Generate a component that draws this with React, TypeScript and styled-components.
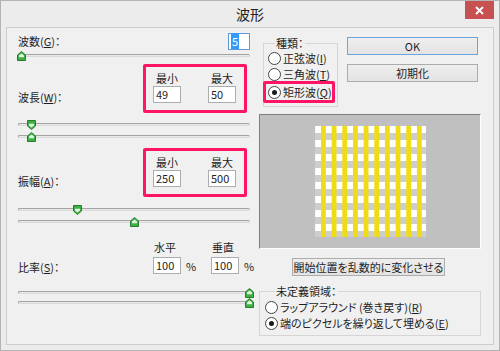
import React from "react";
import styled, { createGlobalStyle } from "styled-components";

const Global = createGlobalStyle`
  html, body { margin: 0; padding: 0; background: #ffffff; }
  body {
    font-family: "Noto Sans CJK JP", "Noto Sans", sans-serif;
    font-size: 11px;
    color: #1e1e1e;
    font-feature-settings: "palt";
  }
  * { box-sizing: border-box; }
`;

const Window = styled.div`
  width: 500px;
  height: 351px;
  background: #ececec;
  border: 1px solid #b4b4b4;
  padding: 0 5px 5px 5px;
  display: flex;
  flex-direction: column;
`;

const TitleBar = styled.div`
  height: 26px;
  flex: none;
  display: grid;
  grid-template-columns: 1fr auto 1fr;
  align-items: center;
`;

const Title = styled.div`
  grid-column: 2;
  font-size: 14px;
  line-height: 18px;
  color: #222;
`;

const CloseButton = styled.div`
  grid-column: 3;
  justify-self: end;
  align-self: start;
  width: 29px;
  height: 18px;
  background: #c75050;
  color: #fff;
  display: flex;
  align-items: center;
  justify-content: center;
`;

const Panel = styled.div`
  flex: 1;
  background: #f0f0f0;
  border: 1px solid #cdcdcd;
  padding: 4px 12px 0 11px;
  display: flex;
  gap: 9px;
`;

const LeftCol = styled.div`
  width: 232px;
  display: flex;
  flex-direction: column;
  & > * { flex-shrink: 0; }
`;

const RightCol = styled.div`
  width: 222px;
  display: flex;
  flex-direction: column;
  & > * { flex-shrink: 0; }
`;

const TopField = styled.div`
  height: 18px;
  display: flex;
  align-items: center;
  justify-content: space-between;
`;

const Label = styled.span<{ $mb?: number }>`
  line-height: 14px;
  white-space: nowrap;
  margin-bottom: ${(p) => p.$mb ?? 0}px;
`;

const TextBox = styled.div<{ $w?: number; $focus?: boolean }>`
  width: ${(p) => p.$w ?? 28}px;
  height: 17px;
  background: #fff;
  border: 1px solid ${(p) => (p.$focus ? "#5a9bd8" : "#abadb3")};
  padding-left: 2px;
  line-height: 15px;
  white-space: nowrap;
`;

const Selected = styled.span`
  background: #3399ff;
  color: #fff;
  padding: 0 1px;
`;

const SliderBox = styled.div<{ $mt: number }>`
  position: relative;
  height: 9px;
  margin-top: ${(p) => p.$mt}px;
  display: flex;
  align-items: center;
`;

const Track = styled.div`
  width: 100%;
  height: 3px;
  border-top: 1px solid #a3a3a3;
  border-left: 1px solid #a3a3a3;
  border-bottom: 1px solid #dadada;
  border-right: 1px solid #c8c8c8;
  border-radius: 2px;
  background: #e9e9e9;
`;

const ThumbSvg = styled.svg<{ $x: number; $down?: boolean }>`
  position: absolute;
  top: 0;
  left: ${(p) => p.$x - 4}px;
  transform: ${(p) => (p.$down ? "scaleY(-1)" : "none")};
`;

const Thumb = ({ x, down }: { x: number; down?: boolean }) => (
  <ThumbSvg $x={x} $down={down} width="9" height="10" viewBox="0 0 9 10">
    <path d="M0.5 4 L4.5 0.5 L8.5 4 L8.5 9.5 L0.5 9.5 Z" fill="#3fae45" stroke="#23802a" strokeWidth="1" />
    <path d="M2 4.6 L4.5 2.4 L7 4.6 L7 6.3 L2 6.3 Z" fill="#ffffff" opacity="0.85" />
  </ThumbSvg>
);

const Slider = ({ x, mt, down }: { x: number; mt: number; down?: boolean }) => (
  <SliderBox $mt={mt}>
    <Track />
    <Thumb x={x} down={down} />
  </SliderBox>
);

const RangeSection = styled.div<{ $mt: number }>`
  display: flex;
  justify-content: space-between;
  align-items: flex-end;
  margin-top: ${(p) => p.$mt}px;
`;

const PinkBox = styled.div`
  width: 104px;
  height: 49px;
  margin-right: 3px;
  border: 3px solid #ff1466;
  border-radius: 2px;
  padding: 4px 0 0 7px;
  display: grid;
  grid-template-columns: 28px 28px;
  column-gap: 27px;
  row-gap: 1px;
  align-content: start;
`;

const ColHead = styled.div`
  line-height: 14px;
  text-align: center;
  white-space: nowrap;
`;

const RatioSection = styled.div`
  display: flex;
  justify-content: space-between;
  align-items: flex-end;
  margin-top: 14px;
`;

const RatioGrid = styled.div`
  width: 97px;
  display: grid;
  grid-template-columns: 28px 30px 28px 11px;
  row-gap: 3px;
  align-items: center;
`;

const ColHeadLeft = styled.div`
  line-height: 14px;
  white-space: nowrap;
  padding-left: 1px;
`;

const Percent = styled.span`
  padding-left: 5px;
  line-height: 14px;
`;

const TopRow = styled.div`
  height: 75px;
  display: flex;
  align-items: flex-start;
`;

const Group = styled.div<{ $mt?: number; $ml?: number; $w?: number; $h: number; $pt: number; $pl: number }>`
  position: relative;
  flex-shrink: 0;
  margin-top: ${(p) => p.$mt ?? 0}px;
  margin-left: ${(p) => p.$ml ?? 0}px;
  width: ${(p) => (p.$w ? `${p.$w}px` : "auto")};
  height: ${(p) => p.$h}px;
  border: 1px solid #d5d5d5;
  padding: ${(p) => p.$pt}px 0 0 ${(p) => p.$pl}px;
  display: flex;
  flex-direction: column;
`;

const Legend = styled.span<{ $left: number }>`
  position: absolute;
  top: -7px;
  left: ${(p) => p.$left}px;
  background: #f0f0f0;
  line-height: 12px;
  padding: 0 1px;
  white-space: nowrap;
`;

const RadioRow = styled.div<{ $h: number }>`
  height: ${(p) => p.$h}px;
  display: flex;
  align-items: center;
  gap: 2px;
  white-space: nowrap;
  line-height: 13px;
`;

const HighlightRow = styled.div`
  width: 72px;
  height: 22px;
  margin: -1px 0 0 -5px;
  border: 3px solid #ff1466;
  border-radius: 2px;
  padding-left: 2px;
  display: flex;
  align-items: center;
  gap: 2px;
  white-space: nowrap;
  line-height: 13px;
`;

const RadioCircle = styled.span<{ $checked?: boolean }>`
  width: 13px;
  height: 13px;
  flex: none;
  border-radius: 50%;
  border: 1px solid #444;
  background: #fff;
  display: inline-flex;
  align-items: center;
  justify-content: center;
  &::after {
    content: "";
    width: 5px;
    height: 5px;
    border-radius: 50%;
    background: ${(p) => (p.$checked ? "#1a1a1a" : "transparent")};
  }
`;

const ButtonCol = styled.div`
  margin: 5px 0 0 9px;
  width: 131px;
  display: flex;
  flex-direction: column;
  gap: 9px;
`;

const Button = styled.div<{ $primary?: boolean; $w?: number; $ml?: number; $mt?: number }>`
  flex-shrink: 0;
  width: ${(p) => (p.$w ? `${p.$w}px` : "100%")};
  margin-left: ${(p) => p.$ml ?? 0}px;
  margin-top: ${(p) => p.$mt ?? 0}px;
  height: 18px;
  border: 1px solid ${(p) => (p.$primary ? "#6aa5dd" : "#acacac")};
  background: linear-gradient(#eeeeee, #e3e3e3);
  display: flex;
  align-items: center;
  justify-content: center;
  line-height: 14px;
  white-space: nowrap;
`;

const Preview = styled.div`
  margin-top: 7px;
  height: 135px;
  background: #c0c0c0;
  border-top: 1px solid #7f7f7f;
  border-left: 1px solid #7f7f7f;
  border-right: 1px solid #ffffff;
  border-bottom: 1px solid #ffffff;
  display: flex;
  align-items: center;
  justify-content: center;
`;

const Pattern = styled.div`
  width: 111px;
  height: 111px;
  background-image:
    linear-gradient(90deg, #f0dc14 0 5px, transparent 5px),
    linear-gradient(180deg, #ffffff 0 7px, #cdcdcd 7px 14px);
  background-size: 10.667px 100%, 100% 14px;
  background-position: 6px 0, 0 0;
  background-repeat: repeat-x, repeat-y;
`;

const Mn = ({ c }: { c: string }) => (
  <>
    (<u>{c}</u>)
  </>
);

export default function App() {
  return (
    <>
      <Global />
      <Window>
        <TitleBar>
          <Title>波形</Title>
          <CloseButton>
            <svg width="9" height="9" viewBox="0 0 9 9">
              <path d="M1 1 L8 8 M8 1 L1 8" stroke="#fff" strokeWidth="1.8" />
            </svg>
          </CloseButton>
        </TitleBar>
        <Panel>
          <LeftCol>
            <TopField>
              <Label>
                波数<Mn c="G" />：
              </Label>
              <TextBox $w={22} $focus>
                <Selected>5</Selected>
              </TextBox>
            </TopField>
            <Slider mt={1} x={3} />

            <RangeSection $mt={4}>
              <Label $mb={9}>
                波長<Mn c="W" />：
              </Label>
              <PinkBox>
                <ColHead>最小</ColHead>
                <ColHead>最大</ColHead>
                <TextBox>49</TextBox>
                <TextBox>50</TextBox>
              </PinkBox>
            </RangeSection>
            <Slider mt={7} x={13} down />
            <Slider mt={3} x={13} />

            <RangeSection $mt={7}>
              <Label $mb={9}>
                振幅<Mn c="A" />：
              </Label>
              <PinkBox>
                <ColHead>最小</ColHead>
                <ColHead>最大</ColHead>
                <TextBox>250</TextBox>
                <TextBox>500</TextBox>
              </PinkBox>
            </RangeSection>
            <Slider mt={8} x={59} down />
            <Slider mt={3} x={116} />

            <RatioSection>
              <Label>
                比率<Mn c="S" />：
              </Label>
              <RatioGrid>
                <ColHeadLeft>水平</ColHeadLeft>
                <span />
                <ColHeadLeft>垂直</ColHeadLeft>
                <span />
                <TextBox>100</TextBox>
                <Percent>%</Percent>
                <TextBox>100</TextBox>
                <Percent>%</Percent>
              </RatioGrid>
            </RatioSection>
            <Slider mt={14} x={231} />
            <Slider mt={1} x={231} />
          </LeftCol>

          <RightCol>
            <TopRow>
              <Group $mt={11} $ml={4} $w={75} $h={64} $pt={6} $pl={4}>
                <Legend $left={11}>種類：</Legend>
                <RadioRow $h={16}>
                  <RadioCircle />
                  <span>
                    正弦波<Mn c="I" />
                  </span>
                </RadioRow>
                <RadioRow $h={16}>
                  <RadioCircle />
                  <span>
                    三角波<Mn c="T" />
                  </span>
                </RadioRow>
                <HighlightRow>
                  <RadioCircle $checked />
                  <span>
                    矩形波<Mn c="Q" />
                  </span>
                </HighlightRow>
              </Group>
              <ButtonCol>
                <Button $primary>OK</Button>
                <Button>初期化</Button>
              </ButtonCol>
            </TopRow>

            <Preview>
              <Pattern />
            </Preview>

            <Button $w={153} $ml={33} $mt={9}>
              開始位置を乱数的に変化させる
            </Button>

            <Group $mt={15} $h={45} $pt={7} $pl={5}>
              <Legend $left={15}>未定義領域：</Legend>
              <RadioRow $h={16}>
                <RadioCircle />
                <span>
                  ラップアラウンド (巻き戻す)<Mn c="R" />
                </span>
              </RadioRow>
              <RadioRow $h={16}>
                <RadioCircle $checked />
                <span>
                  端のピクセルを繰り返して埋める<Mn c="E" />
                </span>
              </RadioRow>
            </Group>
          </RightCol>
        </Panel>
      </Window>
    </>
  );
}
